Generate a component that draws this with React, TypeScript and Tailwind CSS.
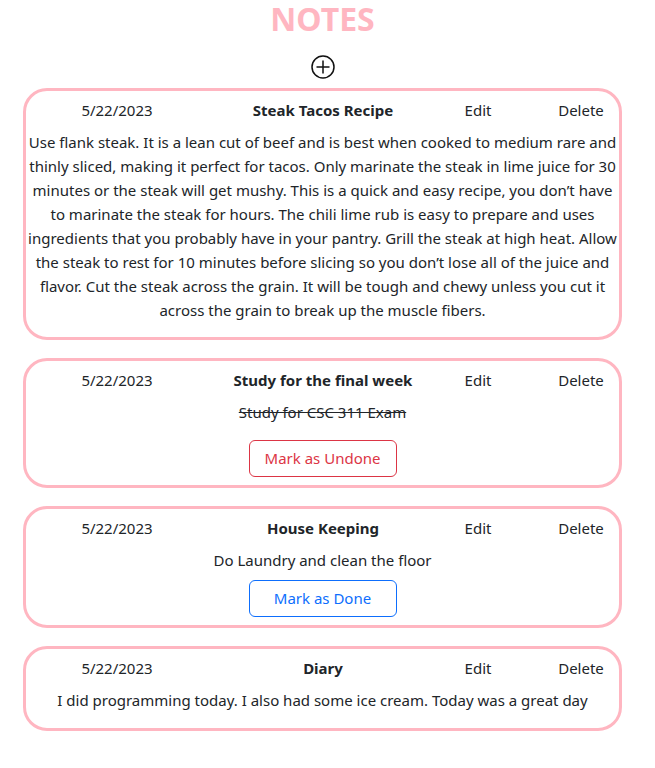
type Note = {
  date: string;
  title: string;
  lines: string[];
  done?: boolean;
  action?: 'undone' | 'done';
};

const notes: Note[] = [
  {
    date: '5/22/2023',
    title: 'Steak Tacos Recipe',
    lines: [
      'Use flank steak. It is a lean cut of beef and is best when cooked to medium rare and',
      'thinly sliced, making it perfect for tacos. Only marinate the steak in lime juice for 30',
      'minutes or the steak will get mushy. This is a quick and easy recipe, you don’t have',
      'to marinate the steak for hours. The chili lime rub is easy to prepare and uses',
      'ingredients that you probably have in your pantry. Grill the steak at high heat. Allow',
      'the steak to rest for 10 minutes before slicing so you don’t lose all of the juice and',
      'flavor. Cut the steak across the grain. It will be tough and chewy unless you cut it',
      'across the grain to break up the muscle fibers.',
    ],
  },
  {
    date: '5/22/2023',
    title: 'Study for the final week',
    lines: ['Study for CSC 311 Exam'],
    done: true,
    action: 'undone',
  },
  {
    date: '5/22/2023',
    title: 'House Keeping',
    lines: ['Do Laundry and clean the floor'],
    action: 'done',
  },
  {
    date: '5/22/2023',
    title: 'Diary',
    lines: ['I did programming today. I also had some ice cream. Today was a great day'],
  },
];

function PlusCircle() {
  return (
    <svg width="24" height="24" viewBox="0 0 24 24" fill="none" stroke="#111" strokeWidth={1.5}>
      <circle cx="12" cy="12" r="11" />
      <path d="M12 5.5v13M5.5 12h13" />
    </svg>
  );
}

function NoteCard({ note }: { note: Note }) {
  return (
    <div className="w-[599px] border-[3px] border-[#ffb6c1] rounded-[24px] pt-[7px]">
      <div className="grid grid-cols-[182px_230px_80px_1fr] leading-[24px] text-center">
        <span>{note.date}</span>
        <span className="font-bold">{note.title}</span>
        <span>Edit</span>
        <span className="pl-[25px]">Delete</span>
      </div>

      {note.action === 'done' ? (
        <p className="mt-[8px] mb-[8px] text-center leading-[24px]">{note.lines[0]}</p>
      ) : (
        <p
          className={
            note.lines.length > 1
              ? 'mt-[8px] mb-[15px] text-center leading-[24px]'
              : 'mt-[8px] mb-[16px] text-center leading-[24px]'
          }
        >
          {note.lines.map((l, i) => (
            <span key={i} className={note.done ? 'block line-through' : 'block'}>
              {l}
            </span>
          ))}
        </p>
      )}

      {note.action && (
        <div className="flex justify-center pb-[8px]">
          <button
            className={
              note.action === 'undone'
                ? 'w-[148px] h-[37px] rounded-[6px] border border-[#dc3545] text-[#dc3545]'
                : 'w-[148px] h-[37px] rounded-[6px] border border-[#0d6efd] text-[#0d6efd]'
            }
          >
            {note.action === 'undone' ? 'Mark as Undone' : 'Mark as Done'}
          </button>
        </div>
      )}
    </div>
  );
}

export default function App() {
  return (
    <div
      className="w-[645px] min-h-[768px] bg-white text-[#212529] text-[15px] flex flex-col items-center"
      style={{ fontFamily: '"Noto Sans", sans-serif' }}
    >
      <h1 className="text-[32px] leading-[42px] -mt-[2px] font-bold text-[#ffb6c1]">NOTES</h1>
      <button className="mt-[15px] mb-[9px]">
        <PlusCircle />
      </button>
      <div className="flex flex-col gap-[18px]">
        {notes.map((n, i) => (
          <NoteCard key={i} note={n} />
        ))}
      </div>
    </div>
  );
}
